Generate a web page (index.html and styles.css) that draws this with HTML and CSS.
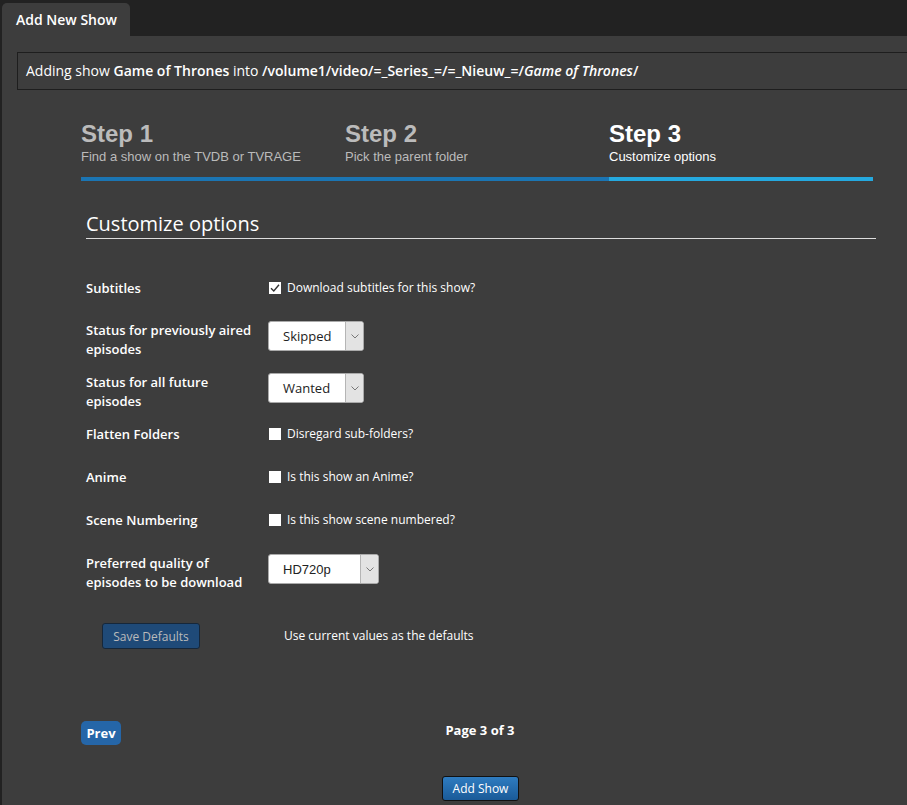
FILE: index.html
```html
<!DOCTYPE html>
<html lang="en">
<head>
    <meta charset="UTF-8">
    <title>Add New Show</title>
    <link rel="stylesheet" href="styles.css">
</head>
<body>
    <!-- Tab -->
    <div class="tabs">
        <div class="tab">Add New Show</div>
    </div>

    <div class="panel">
        <div class="info-box">
            Adding show <b>Game of Thrones</b> into <b>/volume1/video/=_Series_=/=_Nieuw_=/<i>Game of Thrones</i>/</b>
        </div>

        <div class="wizard">
            <!-- Steps -->
            <div class="steps">
                <div class="step done">
                    <div class="step-title">Step 1</div>
                    <div class="step-desc">Find a show on the TVDB or TVRAGE</div>
                </div>
                <div class="step done">
                    <div class="step-title">Step 2</div>
                    <div class="step-desc">Pick the parent folder</div>
                </div>
                <div class="step current">
                    <div class="step-title">Step 3</div>
                    <div class="step-desc">Customize options</div>
                </div>
            </div>

            <!-- Options form -->
            <div class="options">
                <h2 class="section-title">Customize options</h2>

                <div class="form-row first">
                    <div class="field-label">Subtitles</div>
                    <label class="check">
                        <span class="box checked">
                            <svg width="10" height="10" viewBox="0 0 10 10"><path d="M1 5.2 L3.8 8 L9 1.8" fill="none" stroke="#333" stroke-width="1.4"/></svg>
                        </span>
                        Download subtitles for this show?
                    </label>
                </div>

                <div class="form-row tall">
                    <div class="field-label">Status for previously aired episodes</div>
                    <div class="select">
                        <span class="select-value">Skipped</span>
                        <span class="select-arrow">
                            <svg width="8" height="5" viewBox="0 0 8 5"><path d="M0.5 0.5 L4 4 L7.5 0.5" fill="none" stroke="#777" stroke-width="1"/></svg>
                        </span>
                    </div>
                </div>

                <div class="form-row tall">
                    <div class="field-label">Status for all future episodes</div>
                    <div class="select">
                        <span class="select-value">Wanted</span>
                        <span class="select-arrow">
                            <svg width="8" height="5" viewBox="0 0 8 5"><path d="M0.5 0.5 L4 4 L7.5 0.5" fill="none" stroke="#777" stroke-width="1"/></svg>
                        </span>
                    </div>
                </div>

                <div class="form-row">
                    <div class="field-label">Flatten Folders</div>
                    <label class="check"><span class="box"></span>Disregard sub-folders?</label>
                </div>

                <div class="form-row">
                    <div class="field-label">Anime</div>
                    <label class="check"><span class="box"></span>Is this show an Anime?</label>
                </div>

                <div class="form-row">
                    <div class="field-label">Scene Numbering</div>
                    <label class="check"><span class="box"></span>Is this show scene numbered?</label>
                </div>

                <div class="form-row tall">
                    <div class="field-label">Preferred quality of episodes to be download</div>
                    <div class="select wide">
                        <span class="select-value arial">HD720p</span>
                        <span class="select-arrow">
                            <svg width="8" height="5" viewBox="0 0 8 5"><path d="M0.5 0.5 L4 4 L7.5 0.5" fill="none" stroke="#777" stroke-width="1"/></svg>
                        </span>
                    </div>
                </div>

                <div class="defaults-row">
                    <div class="defaults-cell">
                        <button class="btn-defaults">Save Defaults</button>
                    </div>
                    <div class="defaults-note">Use current values as the defaults</div>
                </div>
            </div>

            <!-- Navigation -->
            <div class="nav-row">
                <div><button class="btn-prev">Prev</button></div>
                <div class="page-count">Page 3 of 3</div>
                <div></div>
            </div>

            <div class="submit-row">
                <button class="btn-add">Add Show</button>
            </div>
        </div>
    </div>
</body>
</html>
```

FILE: styles.css
```css
/* Basic Styles */
body {
    margin: 0;
    background-color: #222;
    font-family: "Open Sans", sans-serif;
    color: #fff;
    overflow: hidden;
}

/* Tab */
.tabs {
    padding-top: 3px;
    margin-left: 2px;
}

.tab {
    width: 128px;
    height: 33px;
    box-sizing: border-box;
    padding-left: 14px;
    line-height: 33px;
    font-size: 14px;
    font-weight: 600;
    background-color: #3d3d3d;
    border-radius: 5px 5px 0 0;
}

/* Panel */
.panel {
    margin-left: 2px;
    width: 940px;
    min-height: 780px;
    padding: 16px 15px 20px;
    background-color: #3d3d3d;
}

.info-box {
    height: 38px;
    box-sizing: border-box;
    padding-left: 8px;
    line-height: 36px;
    font-size: 14px;
    border: 1px solid #1e1e1e;
}

.info-box b {
    font-weight: 600;
}

/* Wizard */
.wizard {
    width: 792px;
    margin: 30px 0 0 64px;
}

.steps {
    display: flex;
}

.step {
    flex: 1;
    padding-bottom: 12px;
    border-bottom: 4px solid #1b75b3;
    font-family: "Liberation Sans", Arial, sans-serif;
    color: #bbb;
}

.step.current {
    border-bottom-color: #25a9df;
    color: #fff;
}

.step-title {
    font-size: 24px;
    line-height: 28px;
    font-weight: bold;
}

.step-desc {
    font-size: 13px;
    line-height: 16px;
    padding-top: 1px;
}

/* Options */
.options {
    width: 790px;
    margin-left: 5px;
}

.section-title {
    margin: 29px 0 0;
    padding-bottom: 0;
    font-size: 20px;
    line-height: 28px;
    font-weight: normal;
    border-bottom: 1px solid #ddd;
}

.form-row {
    display: flex;
    align-items: flex-start;
    margin-bottom: 24px;
}

.form-row.first {
    margin-top: 40px;
    margin-bottom: 23px;
}

.form-row.tall {
    margin-bottom: 14px;
}

.field-label {
    width: 182px;
    padding-right: 10px;
    box-sizing: border-box;
    font-size: 13px;
    line-height: 19px;
    font-weight: 600;
}

.check {
    display: flex;
    align-items: center;
    font-size: 12px;
    line-height: 19px;
    margin-top: -1px;
}

.box {
    display: inline-flex;
    align-items: center;
    justify-content: center;
    width: 12px;
    height: 12px;
    margin: 0 6px 0 1px;
    background-color: #fff;
}

/* Select boxes */
.select {
    position: relative;
    width: 96px;
    height: 30px;
    box-sizing: border-box;
    background-color: #fff;
    border: 1px solid #aaa;
    border-radius: 3px;
    color: #222;
    font-size: 13px;
    line-height: 28px;
}

.select.wide {
    width: 111px;
}

.select-value {
    padding-left: 14px;
}

.select-value.arial {
    font-family: "Liberation Sans", Arial, sans-serif;
}

.select-arrow {
    position: absolute;
    top: 0;
    right: 0;
    bottom: 0;
    width: 17px;
    display: flex;
    align-items: center;
    justify-content: center;
    background-color: #e3e3e3;
    border-left: 1px solid #b5b5b5;
    border-radius: 0 2px 2px 0;
}

/* Defaults */
.defaults-row {
    display: flex;
    align-items: center;
    margin-top: 31px;
}

.defaults-cell {
    width: 182px;
    padding-left: 16px;
    box-sizing: border-box;
}

.btn-defaults {
    width: 98px;
    height: 26px;
    padding: 0;
    font-family: "Open Sans", sans-serif;
    font-size: 12px;
    color: #bbb;
    background-color: #1f4a78;
    border: 1px solid #16273a;
    border-radius: 3px;
}

.defaults-note {
    padding: 0 0 2px 16px;
    font-size: 12px;
}

/* Navigation */
.nav-row {
    display: grid;
    grid-template-columns: 1fr auto 1fr;
    align-items: center;
    margin-top: 72px;
}

.btn-prev {
    width: 40px;
    height: 24px;
    padding: 0;
    font-family: "Open Sans", sans-serif;
    font-size: 13px;
    font-weight: bold;
    color: #fff;
    background-color: #2566a8;
    border: none;
    border-radius: 5px;
}

.page-count {
    padding: 0 0 6px 6px;
    font-size: 13px;
    font-weight: bold;
}

.submit-row {
    display: flex;
    justify-content: center;
    margin-top: 31px;
    padding-left: 7px;
}

.btn-add {
    width: 77px;
    height: 25px;
    padding: 0;
    font-family: "Open Sans", sans-serif;
    font-size: 12px;
    color: #fff;
    background: linear-gradient(#2f7cc0, #1a5a98);
    border: 1px solid #111;
    border-radius: 3px;
}
```
